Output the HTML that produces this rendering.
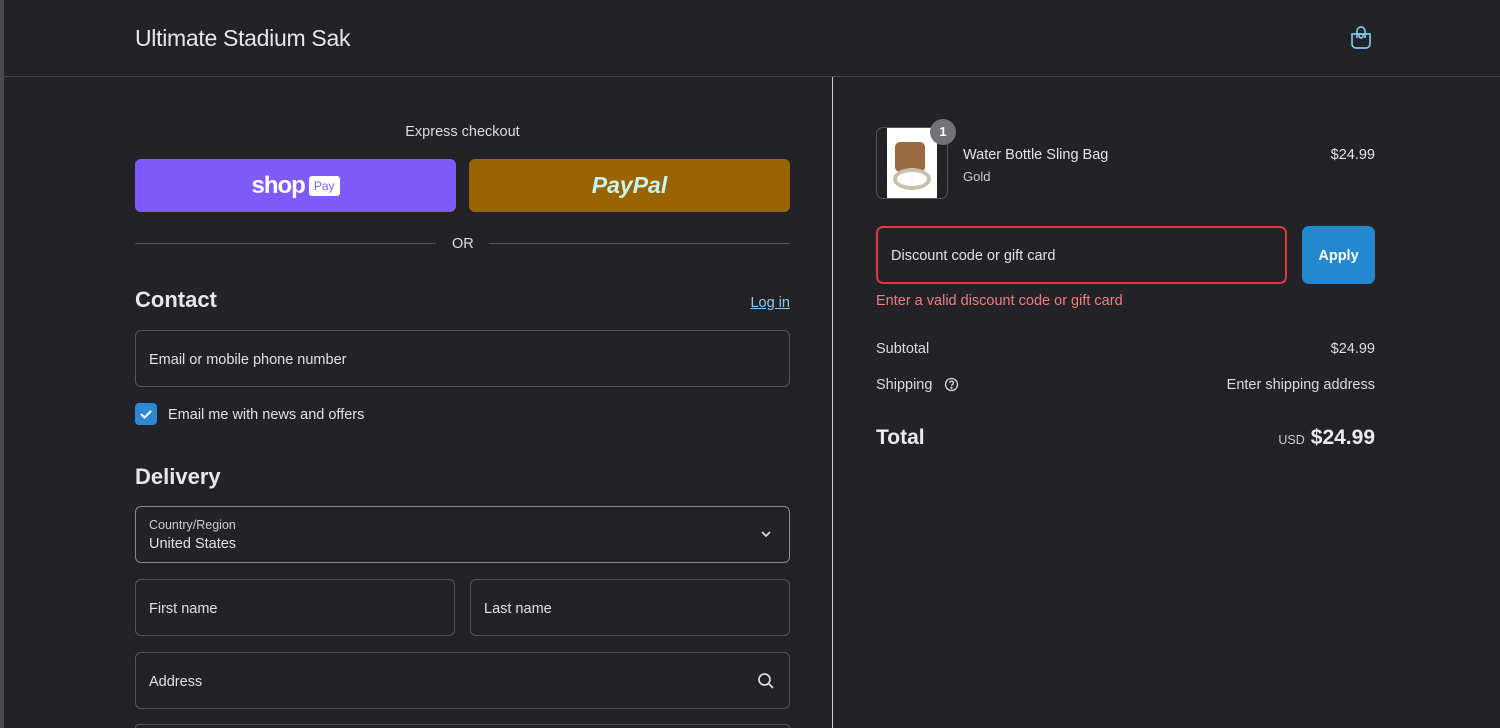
<!DOCTYPE html>
<html><head><meta charset="utf-8"><style>
*{box-sizing:border-box;margin:0;padding:0}
html{width:1500px;height:728px;overflow:hidden;background:#232227}
body{width:1500px;height:728px;overflow:hidden;background:#232227;font-family:"Liberation Sans",sans-serif;color:#e8e8ea;position:relative}
.edge{position:absolute;left:0;top:0;width:4px;height:728px;background:#4a4a4f}
.hdr{position:absolute;left:4px;right:0;top:0;height:77px;border-bottom:1px solid #48474c}
.title{position:absolute;left:135px;top:25px;font-size:23px;color:#e6e6e8;letter-spacing:-0.3px}
.vline{position:absolute;left:832px;top:77px;width:1px;height:651px;background:#cfcfd2}
.a{position:absolute;font-size:14.5px}
.r{position:absolute;right:125px;font-size:14.5px;text-align:right}
.inp{position:absolute;border:1px solid #55545a;border-radius:6px;font-size:14.5px;color:#e2e2e4;padding-left:13px;display:flex;align-items:center}
</style></head><body>
<div class="edge"></div>
<div class="hdr"></div>
<div class="title">Ultimate Stadium Sak</div>
<svg class="a" style="left:1350px;top:25px" width="22" height="25" viewBox="0 0 22 25" fill="none" stroke="#7fc6e8" stroke-width="1.7"><path d="M2 9h18v10a4 4 0 0 1-4 4H6a4 4 0 0 1-4-4z"/><path d="M7 13V6a4 4 0 0 1 8 0v7"/><circle cx="11" cy="11" r="2"/></svg>
<div class="vline"></div>

<div class="a" style="left:135px;width:655px;top:124px;text-align:center;color:#ddd">Express checkout</div>
<div class="a" style="left:135px;top:159px;width:321px;height:53px;background:#7f5bfc;border-radius:6px;display:flex;align-items:center;justify-content:center;gap:4px">
<span style="font-weight:bold;font-size:24px;color:#fff;letter-spacing:-1px">shop</span><span style="background:#fff;color:#7f5bfc;font-size:12px;padding:3px 5px;border-radius:3px">Pay</span></div>
<div class="a" style="left:469px;top:159px;width:321px;height:53px;background:#996400;border-radius:6px;display:flex;align-items:center;justify-content:center;font-weight:bold;font-style:italic;font-size:23px;color:#c8f5ee">PayPal</div>
<div class="a" style="left:135px;top:243px;width:301px;height:1px;background:#4f4e54"></div>
<div class="a" style="left:489px;top:243px;width:301px;height:1px;background:#4f4e54"></div>
<div class="a" style="left:452px;top:236px;color:#ddd">OR</div>

<div class="a" style="left:135px;top:287px;font-size:22px;font-weight:bold;color:#e8e8ea">Contact</div>
<div class="a" style="right:710px;top:295px;color:#8cc8ee;text-decoration:underline">Log in</div>
<div class="inp" style="left:135px;top:330px;width:655px;height:57px;padding-top:2px">Email or mobile phone number</div>
<div class="a" style="left:135px;top:403px;width:22px;height:22px;background:#2e8ad0;border-radius:4px"><svg width="22" height="22" viewBox="0 0 22 22"><path d="M6 11l3.5 3.5L16 8" stroke="#fff" stroke-width="2" fill="none"/></svg></div>
<div class="a" style="left:168px;top:407px;color:#e2e2e4">Email me with news and offers</div>

<div class="a" style="left:135px;top:464px;font-size:22px;font-weight:bold;color:#e8e8ea">Delivery</div>
<div class="inp" style="left:135px;top:506px;width:655px;height:57px;display:block;padding-top:11px;border-color:#8a8990">
<div style="font-size:12.5px;color:#ccc">Country/Region</div><div style="font-size:14.5px;margin-top:4px">United States</div></div>
<svg class="a" style="left:759px;top:529px" width="14" height="10" viewBox="0 0 14 10"><path d="M3 3l4 4 4-4" stroke="#ddd" stroke-width="1.7" fill="none"/></svg>
<div class="inp" style="left:135px;top:579px;width:320px;height:57px;padding-top:2px">First name</div>
<div class="inp" style="left:470px;top:579px;width:320px;height:57px;padding-top:2px">Last name</div>
<div class="inp" style="left:135px;top:652px;width:655px;height:57px;padding-top:2px">Address</div>
<svg class="a" style="left:757px;top:672px" width="18" height="18" viewBox="0 0 18 18" fill="none" stroke="#ddd" stroke-width="1.7"><circle cx="7.5" cy="7.5" r="5.5"/><path d="M11.5 11.5L16 16"/></svg>
<div class="inp" style="left:135px;top:724px;width:655px;height:4px;border-bottom:none;border-radius:6px 6px 0 0"></div>

<div class="a" style="left:876px;top:127px;width:72px;height:72px;border:1px solid #55545a;border-radius:7px;overflow:hidden;background:#232227">
<div style="position:absolute;left:10px;top:0;width:50px;height:72px;background:#fff"></div>
<div style="position:absolute;left:18px;top:14px;width:30px;height:30px;background:#9a6a40;border-radius:5px"></div>
<div style="position:absolute;left:16px;top:40px;width:38px;height:22px;border:4px solid #c8c0a8;border-radius:50%"></div>
</div>
<div class="a" style="left:930px;top:119px;width:26px;height:26px;border-radius:50%;background:#737277;color:#fff;font-size:13px;font-weight:bold;text-align:center;line-height:26px">1</div>
<div class="a" style="left:963px;top:147px;color:#e4e4e6">Water Bottle Sling Bag</div>
<div class="a" style="left:963px;top:169px;font-size:13px;color:#ccc">Gold</div>
<div class="r" style="top:147px;color:#e4e4e6">$24.99</div>

<div class="inp" style="left:876px;top:226px;width:411px;height:58px;border:2px solid #e0383f;border-radius:7px;padding-top:2px">Discount code or gift card</div>
<div class="a" style="left:1302px;top:226px;width:73px;height:58px;background:#2388d0;border-radius:7px;color:#fff;font-weight:bold;text-align:center;line-height:60px">Apply</div>
<div class="a" style="left:876px;top:293px;color:#f07c80">Enter a valid discount code or gift card</div>

<div class="a" style="left:876px;top:341px;color:#ddd">Subtotal</div>
<div class="r" style="top:341px;color:#ddd">$24.99</div>
<div class="a" style="left:876px;top:377px;color:#ddd">Shipping</div>
<svg class="a" style="left:944px;top:377px" width="15" height="15" viewBox="0 0 15 15" fill="none" stroke="#ddd" stroke-width="1.3"><circle cx="7.5" cy="7.5" r="6"/><path d="M5.8 6a1.8 1.8 0 1 1 2.4 1.6c-.5.3-.7.6-.7 1.2"/><circle cx="7.5" cy="10.8" r=".5" fill="#ddd"/></svg>
<div class="r" style="top:377px;color:#ddd">Enter shipping address</div>
<div class="a" style="left:876px;top:426px;font-size:21px;font-weight:bold;color:#ececee">Total</div>
<div class="r" style="top:426px;font-size:21px;font-weight:bold;color:#ececee"><span style="font-size:12.5px;font-weight:normal;color:#ccc;margin-right:6px">USD</span>$24.99</div>
</body></html>
